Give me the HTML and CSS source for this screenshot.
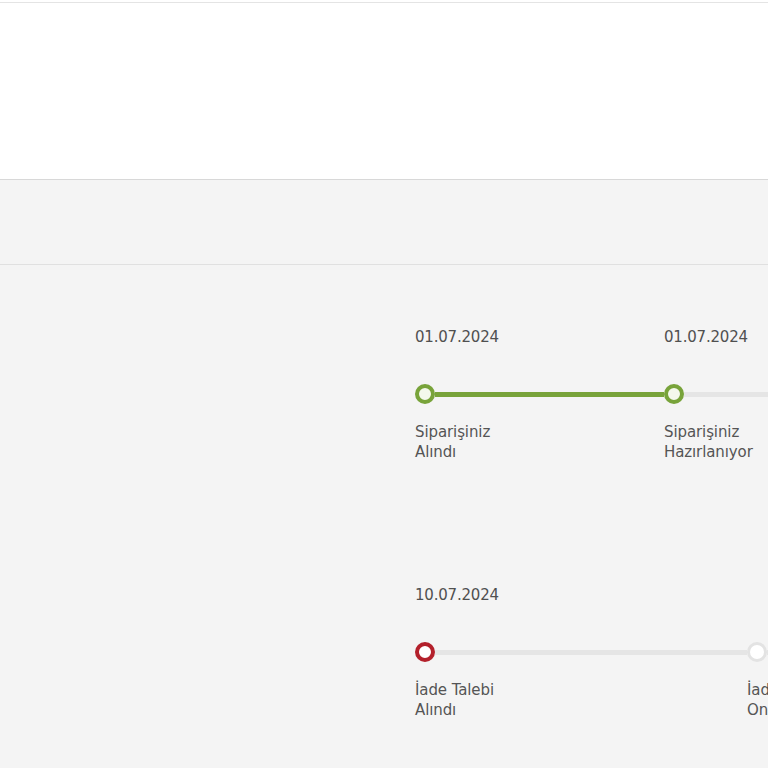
FILE: index.html
```html
<!DOCTYPE html>
<html lang="tr">
<head>
<meta charset="utf-8">
<title>Sipariş Takibi</title>
<link rel="stylesheet" href="styles.css">
</head>
<body>
<header class="header">
  <div class="header-inner"></div>
</header>
<div class="subbar"></div>
<main class="content">
  <section class="timeline">
    <div class="step done">
      <div class="date">01.07.2024</div>
      <div class="track"><span class="dot"></span><span class="seg"></span></div>
      <div class="label">Siparişiniz<br>Alındı</div>
    </div>
    <div class="step current">
      <div class="date">01.07.2024</div>
      <div class="track"><span class="dot"></span><span class="seg"></span></div>
      <div class="label">Siparişiniz<br>Hazırlanıyor</div>
    </div>
    <div class="step">
      <div class="date">&nbsp;</div>
      <div class="track"><span class="dot"></span><span class="seg"></span></div>
      <div class="label">Kargoya<br>Verildi</div>
    </div>
    <div class="step last">
      <div class="date">&nbsp;</div>
      <div class="track"><span class="dot"></span></div>
      <div class="label">Teslim<br>Edildi</div>
    </div>
  </section>
  <section class="timeline second">
    <div class="step return">
      <div class="date">10.07.2024</div>
      <div class="track"><span class="dot"></span><span class="seg"></span></div>
      <div class="label">İade Talebi<br>Alındı</div>
    </div>
    <div class="step">
      <div class="date">&nbsp;</div>
      <div class="track"><span class="dot"></span><span class="seg"></span></div>
      <div class="label">İade<br>Onaylandı</div>
    </div>
    <div class="step last">
      <div class="date">&nbsp;</div>
      <div class="track"><span class="dot"></span></div>
      <div class="label">İade<br>Tamamlandı</div>
    </div>
  </section>
</main>
</body>
</html>
```

FILE: styles.css
```css
html, body {
  margin: 0;
  padding: 0;
  background: #f4f4f4;
  overflow: hidden;
  font-family: "DejaVu Sans", "Open Sans", sans-serif;
  color: #555;
}

.header {
  background: #fff;
  padding-top: 2px;
}

.header-inner {
  height: 176px;
  border-top: 1px solid #e4e4e4;
  border-bottom: 1px solid #d8d8d8;
}

.subbar {
  height: 84px;
  background: #f4f4f4;
  border-bottom: 1px solid #e0e0e0;
}

.content {
  padding: 62px 0 0 415px;
}

.timeline {
  display: flex;
  width: 996px;
}

.timeline.second {
  margin-top: 123px;
}

.step {
  flex: 1 1 0;
  display: flex;
  flex-direction: column;
}

.date {
  font-size: 15px;
  line-height: 20px;
  color: #505050;
  letter-spacing: -0.2px;
}

.track {
  display: flex;
  align-items: center;
  height: 20px;
  margin-top: 37px;
}

.dot {
  box-sizing: border-box;
  width: 20px;
  height: 20px;
  border-radius: 50%;
  border: 3px solid #e3e3e3;
  background: #fff;
  flex: none;
}

.seg {
  flex: 1;
  height: 5px;
  background: #e5e5e5;
}

.done .dot,
.current .dot {
  border: 4px solid #78a33a;
  background: #f4f8ec;
}

.done .seg {
  background: #78a33a;
}

.return .dot {
  border: 4px solid #b3202b;
  background: #fff;
}

.label {
  margin-top: 18px;
  font-size: 15px;
  line-height: 20px;
  color: #555;
  letter-spacing: -0.1px;
}
```
